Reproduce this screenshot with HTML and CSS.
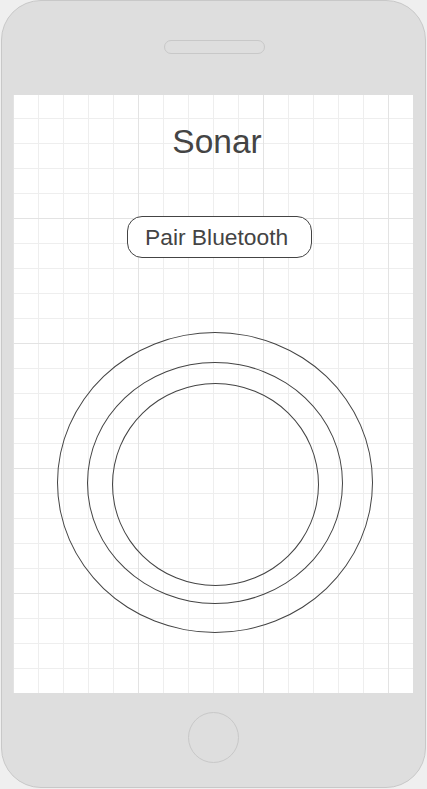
FILE: index.html
```html
<!DOCTYPE html>
<html lang="en">
<head>
<meta charset="utf-8">
<title>Sonar</title>
<link rel="stylesheet" href="styles.css">
</head>
<body>
<div class="phone">
  <div class="speaker"></div>
  <main class="screen">
    <h1 class="title">Sonar</h1>
    <button class="pair-btn" type="button">Pair Bluetooth</button>
    <div class="sonar">
      <div class="ring ring-outer"></div>
      <div class="ring ring-middle"></div>
      <div class="ring ring-inner"></div>
    </div>
  </main>
  <div class="home"></div>
</div>
</body>
</html>
```

FILE: styles.css
```css
* { box-sizing: border-box; }

html, body {
  margin: 0;
  padding: 0;
  background: #efefef;
  font-family: "Liberation Sans", Arial, sans-serif;
}

.phone {
  margin: 0 0 0 1px;
  width: 425px;
  height: 788px;
  background: #dedede;
  border: 1px solid #c8c8c8;
  border-radius: 40px;
  display: flex;
  flex-direction: column;
  align-items: flex-start;
  padding-top: 39px;
}

.speaker {
  align-self: center;
  width: 101px;
  height: 14px;
  margin-left: 1px;
  border: 1px solid #c8c8c8;
  border-radius: 7px;
  background: #dedede;
}

.screen {
  margin: 41px 0 0 11px;
  width: 400px;
  height: 598px;
  background-color: #ffffff;
  background-image:
    linear-gradient(to right, #e3e3e3 1px, transparent 1px),
    linear-gradient(to bottom, #e3e3e3 1px, transparent 1px),
    linear-gradient(to right, #eeeeee 1px, transparent 1px),
    linear-gradient(to bottom, #eeeeee 1px, transparent 1px);
  background-size: 125px 125px, 125px 125px, 25px 25px, 25px 25px;
  background-position: 0 -2px, 0 -2px, 0 -2px, 0 -2px;
  display: flex;
  flex-direction: column;
  align-items: flex-start;
}

.title {
  align-self: stretch;
  margin: 30px 0 0 0;
  padding-left: 8px;
  font-size: 33.5px;
  line-height: 33.5px;
  font-weight: normal;
  color: #444444;
  text-align: center;
}

.pair-btn {
  margin: 57px 0 0 114px;
  width: 185px;
  height: 42px;
  padding: 1px 0 0 17px;
  border: 1px solid #444444;
  border-radius: 15px;
  background: #ffffff;
  font-family: "Liberation Sans", Arial, sans-serif;
  font-size: 22.8px;
  line-height: 39px;
  color: #444444;
  text-align: left;
}

.sonar {
  margin: 74px 0 0 44px;
  width: 316px;
  height: 301px;
  display: grid;
  place-items: center;
}

.ring {
  grid-area: 1 / 1;
  border: 1px solid #444444;
  border-radius: 50%;
}

.ring-outer {
  width: 316px;
  height: 301px;
}

.ring-middle {
  width: 256px;
  height: 242px;
  margin-top: 2px;
}

.ring-inner {
  width: 207px;
  height: 203px;
  margin-top: 4px;
  margin-left: 1px;
}

.home {
  align-self: center;
  margin-top: 19px;
  width: 51px;
  height: 51px;
  border: 1px solid #c8c8c8;
  border-radius: 50%;
  background: #dedede;
}
```
